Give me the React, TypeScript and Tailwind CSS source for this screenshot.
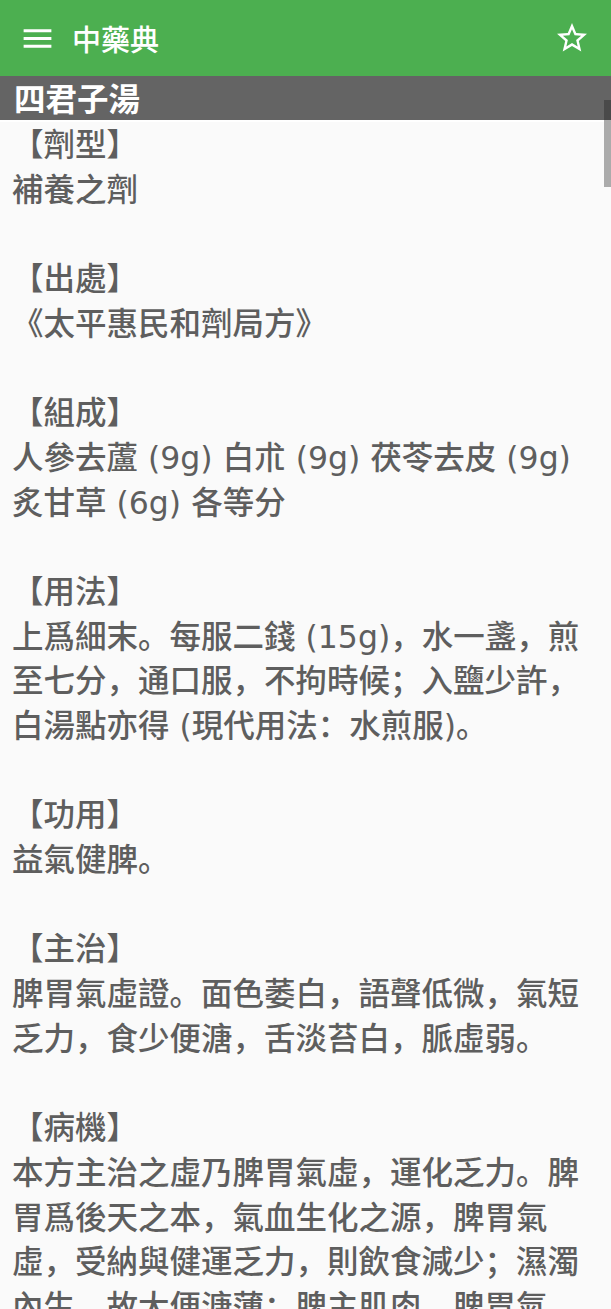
import { MdMenu, MdStarBorder } from "react-icons/md";

const LINES = [
  "【劑型】",
  "補養之劑",
  "",
  "【出處】",
  "《太平惠民和劑局方》",
  "",
  "【組成】",
  "人參去蘆 (9g) 白朮 (9g) 茯苓去皮 (9g)",
  "炙甘草 (6g) 各等分",
  "",
  "【用法】",
  "上爲細末。每服二錢 (15g)，水一盞，煎",
  "至七分，通口服，不拘時候；入鹽少許，",
  "白湯點亦得 (現代用法：水煎服)。",
  "",
  "【功用】",
  "益氣健脾。",
  "",
  "【主治】",
  "脾胃氣虛證。面色萎白，語聲低微，氣短",
  "乏力，食少便溏，舌淡苔白，脈虛弱。",
  "",
  "【病機】",
  "本方主治之虛乃脾胃氣虛，運化乏力。脾",
  "胃爲後天之本，氣血生化之源，脾胃氣",
  "虛，受納與健運乏力，則飲食減少；濕濁",
  "內生，故大便溏薄；脾主肌肉，脾胃氣",
  "虛，四肢肌肉無所稟受，故四肢乏力；",
];

// Latin from DejaVu (wider digits, like the device font), CJK with SC-style punctuation
const FONT = '"DejaVu Sans", "Noto Sans CJK SC", sans-serif';
const CJK = '"Noto Sans CJK SC", sans-serif';

export default function App() {
  return (
    <div
      className="relative flex h-[1309px] w-full flex-col overflow-hidden bg-[#fafafa]"
      style={{ fontFamily: FONT }}
    >
      {/* app bar */}
      <header className="flex h-[76px] shrink-0 items-center bg-[#4caf50] pl-[19px] pr-[21px] text-white">
        <MdMenu className="h-[37px] w-[37px]" />
        <span
          className="ml-[16px] text-[29px] font-medium leading-none"
          style={{ fontFamily: CJK }}
        >
          中藥典
        </span>
        <MdStarBorder className="ml-auto h-[36px] w-[36px]" />
      </header>

      {/* formula title */}
      <div className="flex h-[44px] shrink-0 items-center bg-[#646464] pl-[14px]">
        <h1
          className="text-[31.5px] font-bold leading-none text-white"
          style={{ fontFamily: CJK }}
        >
          四君子湯
        </h1>
      </div>
      <div className="h-[2px] shrink-0 bg-white" />

      <div className="pl-[12px] pt-[1px] text-[31.5px] font-medium leading-[44.7px] text-[#5e5e5e]">
        {LINES.map((line, i) => (
          <div key={i} className="h-[44.7px] whitespace-pre">
            {line}
          </div>
        ))}
      </div>

      {/* scrollbar */}
      <div className="absolute right-0 top-[100px] h-[20px] w-[7px] bg-[#4a4a4a]" />
      <div className="absolute right-0 top-[120px] h-[67px] w-[7px] bg-[#ababab]" />
    </div>
  );
}
